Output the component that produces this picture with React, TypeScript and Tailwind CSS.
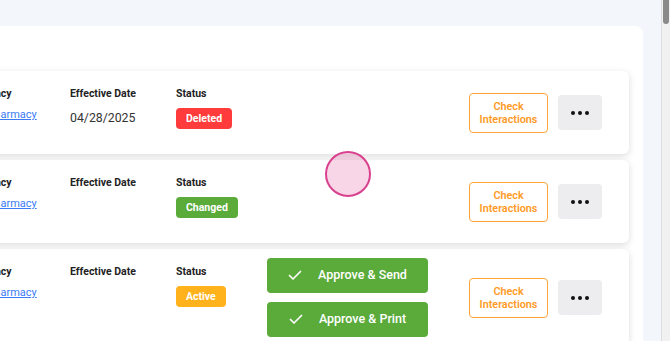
import React from "react"

type Row = {
  status: string
  badge: string
  date?: string
  approve?: boolean
}

const rows: Row[] = [
  { status: "Deleted", badge: "bg-[#ff3b3b]", date: "04/28/2025" },
  { status: "Changed", badge: "bg-[#5aab3a]" },
  { status: "Active", badge: "bg-[#ffb21c]", approve: true },
]

function CheckMark() {
  return (
    <svg width="14" height="11" viewBox="0 0 14 11" fill="none">
      <polyline points="1.5,5.5 5,9 12.5,1.5" stroke="white" strokeWidth="1.7" strokeLinecap="round" strokeLinejoin="round" />
    </svg>
  )
}

function RowCard({ row }: { row: Row }) {
  return (
    <div className="flex items-center min-h-[83px] py-[9px] pl-[20px] pr-[27px] bg-white rounded-md shadow-[0_2px_7px_rgba(0,0,0,0.14)]">
      <div className="self-start mt-[6px] flex">
        <div className="w-[106px]">
          <div className="text-[10.5px] font-bold leading-[16px] text-[#222]">Pharmacy</div>
          <a href="#" className="block mt-[5px] text-[11px] leading-[16px] text-[#3b7cf6] underline whitespace-nowrap">
            CVS Pharmacy
          </a>
        </div>
        <div className="w-[106px]">
          <div className="text-[10.5px] font-bold leading-[16px] text-[#222]">Effective Date</div>
          {row.date && <div className="mt-[8px] text-[12.3px] leading-[16px] text-[#333]">{row.date}</div>}
        </div>
        <div className="w-[91px]">
          <div className="text-[10.5px] font-bold leading-[16px] text-[#222]">Status</div>
          <span className={`mt-[6px] inline-flex h-[21px] items-center px-[10px] rounded-[4px] text-[10.5px] font-bold text-white ${row.badge}`}>
            {row.status}
          </span>
        </div>
      </div>
      {row.approve && (
        <div className="flex flex-col gap-[9px]">
          <button className="flex h-[35px] w-[161px] items-center justify-center gap-[16px] rounded-[4px] bg-[#5aab3a] text-[12.5px] font-medium text-white">
            <CheckMark />
            Approve &amp; Send
          </button>
          <button className="flex h-[35px] w-[161px] items-center justify-center gap-[16px] rounded-[4px] bg-[#5aab3a] text-[12.5px] font-medium text-white">
            <CheckMark />
            Approve &amp; Print
          </button>
        </div>
      )}
      <div className="ml-auto flex items-center gap-[10px]">
        <button className="h-[40px] w-[79px] rounded-[4px] border border-[#ffa53a] bg-white text-[10.8px] font-semibold leading-[13px] text-[#ff9a26]">
          Check
          <br />
          Interactions
        </button>
        <button className="flex h-[35px] w-[44px] items-center justify-center gap-[3px] rounded-[4px] bg-[#ededf0]">
          <span className="h-[4px] w-[4px] rounded-full bg-[#111]" />
          <span className="h-[4px] w-[4px] rounded-full bg-[#111]" />
          <span className="h-[4px] w-[4px] rounded-full bg-[#111]" />
        </button>
      </div>
    </div>
  )
}

export default function App() {
  return (
    <div className="relative flex h-[341px] w-[670px] overflow-hidden bg-[#f3f6fb]" style={{ fontFamily: "Roboto, 'Liberation Sans', sans-serif" }}>
      <div className="flex-1 pt-[26px] pr-[18px]">
        <div className="-ml-[70px] h-full rounded-tr-lg bg-white pt-[45px] pl-[14px] pr-[14px]">
          <div className="flex flex-col gap-[6px]">
            {rows.map(r => (
              <RowCard key={r.status} row={r} />
            ))}
          </div>
        </div>
      </div>
      <div className="w-[9px] border-l border-[#dcdcdc] bg-[#f1f1f1] pl-[1px]">
        <div className="h-[24px] w-[6px] rounded-b-full bg-[#8a8a8a]" />
      </div>
      <div className="absolute left-[325px] top-[151px] h-[46px] w-[46px] rounded-full border-2 border-[#d9408e] bg-[rgba(232,90,160,0.25)]" />
    </div>
  )
}
